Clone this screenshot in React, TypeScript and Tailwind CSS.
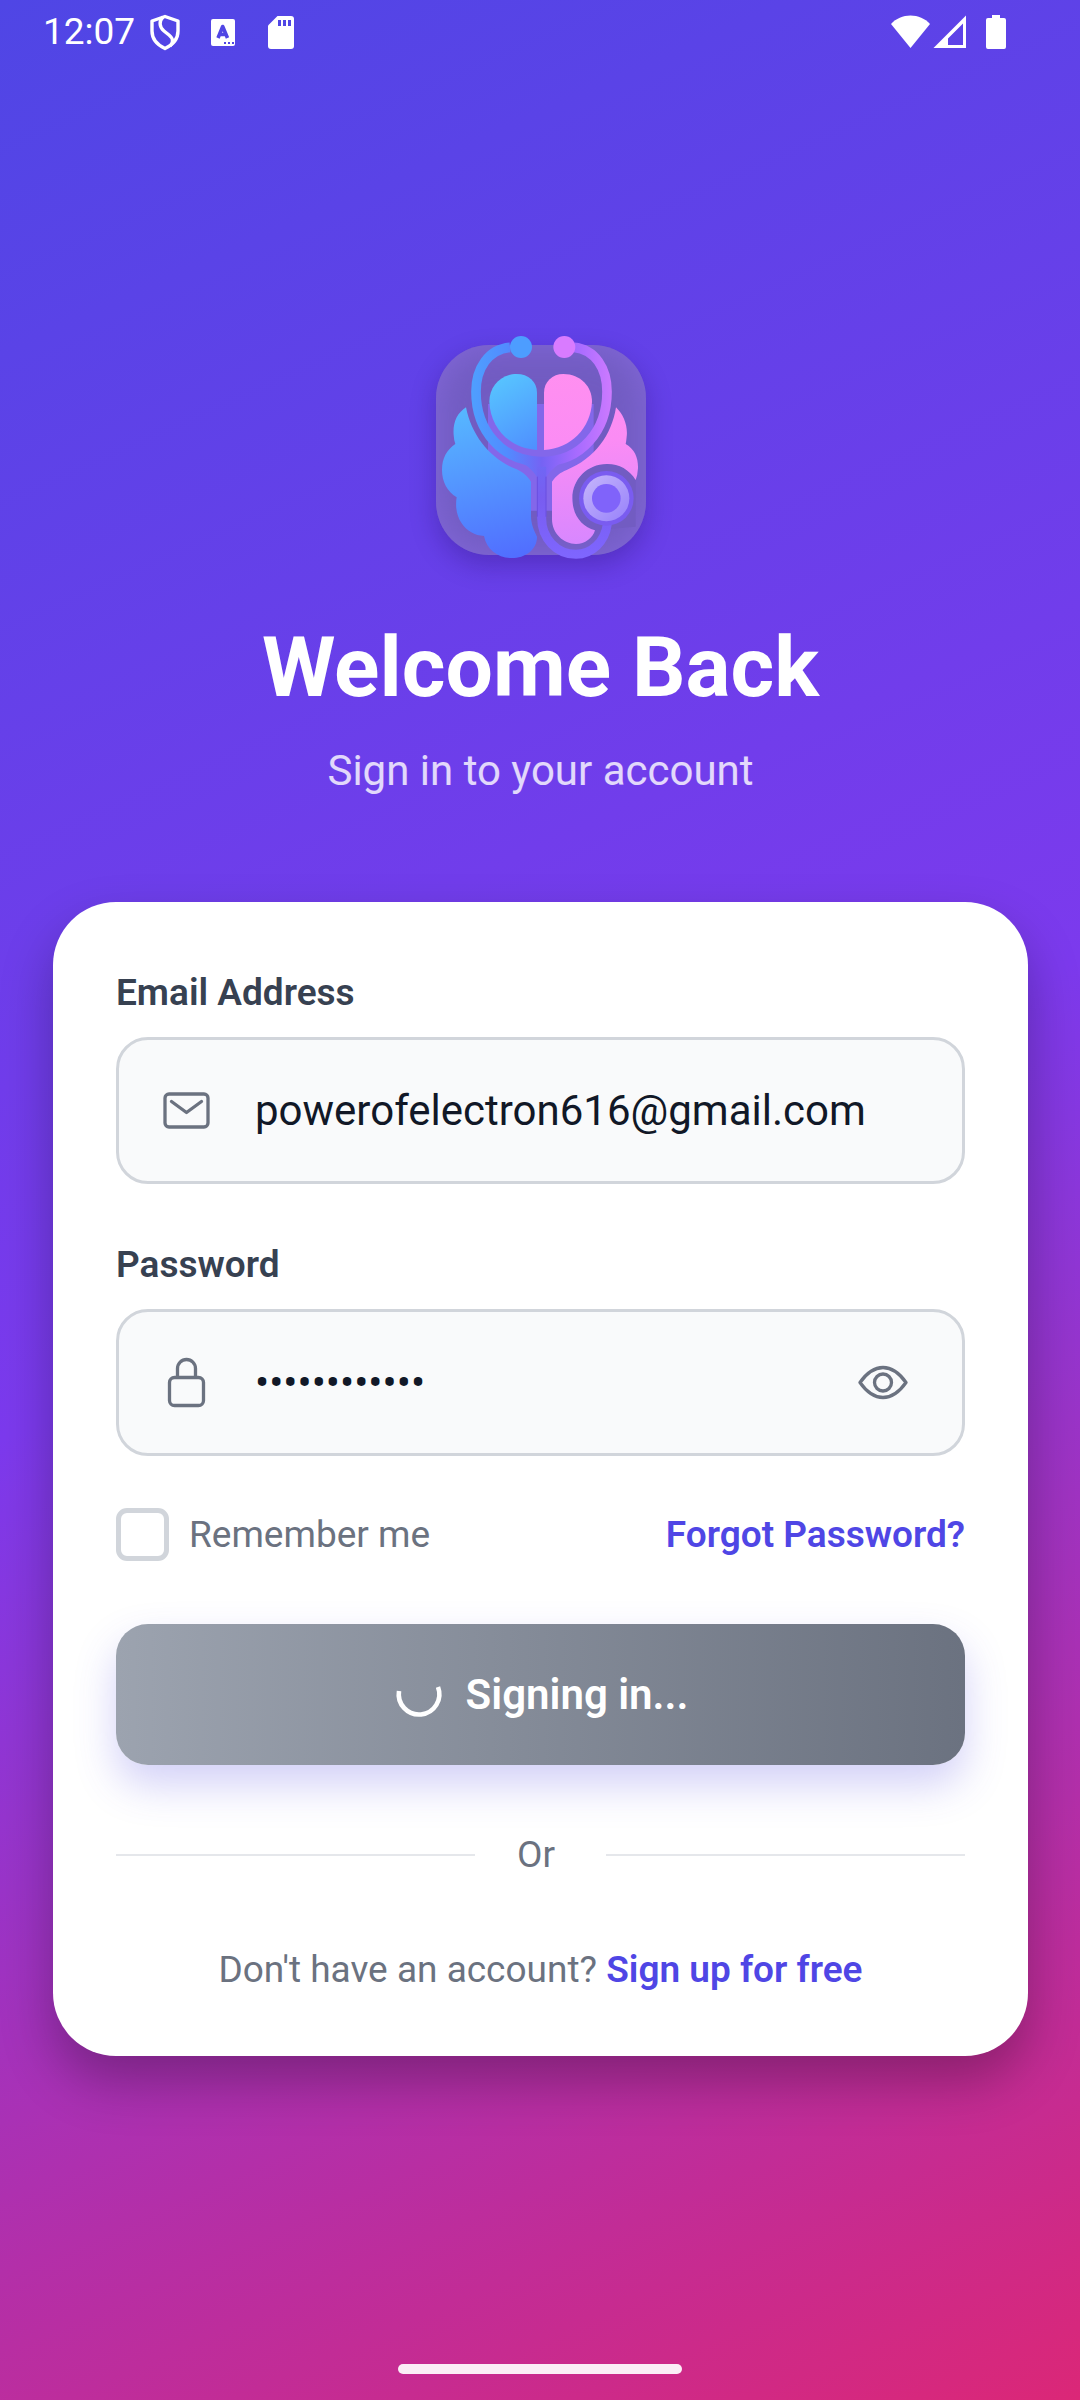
import { useState } from 'react';

function StatusIcons() {
  return (
    <div className="flex items-center text-white">
      <svg viewBox="0 0 32 38" className="ml-[14px] h-[38px] w-8" fill="none" stroke="currentColor" strokeWidth="3.400">
        <path d="M16 3.500 29 8V18C29 26 23.500 32 16 35.500 8.500 32 3 26 3 18V8Z" strokeLinejoin="round" />
        <path d="M14 4C10 8 10 14 15 18L20 22C25 26 24 30 21 33" />
      </svg>
      <svg viewBox="0 0 24 27" className="ml-[30px] h-[27px] w-6">
        <rect width="24" height="27" rx="2" fill="currentColor" />
        <path d="M7 19 11.700 7.500 16.500 19M8.500 15.500h6.500" stroke="#5046e4" strokeWidth="3.600" fill="none" strokeLinejoin="round" />
        <path d="M13 23h2v2h-2zm4 0h2v2h-2zm4 0h2v2h-2z" fill="#5046e4" />
      </svg>
      <svg viewBox="0 0 26 33" className="ml-[33px] h-[33px] w-[26px]">
        <path d="M9.500 0H23a3 3 0 0 1 3 3V30a3 3 0 0 1-3 3H3a3 3 0 0 1-3-3V9.500Z" fill="currentColor" />
        <path d="M10 4h3v6h-3zm5 0h3v6h-3zm5 0h3v6h-3z" fill="#5046e4" />
      </svg>
    </div>
  );
}

function SignalIcons() {
  return (
    <div className="flex items-center text-white">
      <svg viewBox="0 0 40 34" className="h-[34px] w-10" fill="currentColor">
        <path d="M0 9C5 3.500 12 .500 19.500 .500S34 3.500 39 9L19.500 33Z" />
      </svg>
      <svg viewBox="0 0 34 34" className="ml-[2px] h-[34px] w-[34px]" fill="currentColor" fillRule="evenodd">
        <path d="M33 .500V33H.500ZM30 8.500 15 23.500V30H30Z" />
      </svg>
      <svg viewBox="0 0 20 34" className="ml-[19px] h-[34px] w-5" fill="currentColor">
        <path d="M6 0h8v3h4a2 2 0 0 1 2 2V32a2 2 0 0 1-2 2H2a2 2 0 0 1-2-2V5a2 2 0 0 1 2-2h4Z" />
      </svg>
    </div>
  );
}

function Logo() {
  return (
    <div className="relative size-[210px] rounded-[53px] bg-[#725cc2] shadow-[0_10px_26px_rgba(30,10,90,0.28),inset_0_0_36px_rgba(136,108,226,0.75)]">
      <svg viewBox="0 0 720 780" className="absolute -left-4 -top-[25px] h-[260px] w-60" role="img" aria-label="Brain and stethoscope logo">
        <defs>
          <linearGradient id="left" gradientUnits="userSpaceOnUse" x1="150" y1="180" x2="290" y2="714">
            <stop stopColor="#57c4ff" />
            <stop offset="1" stopColor="#516dff" />
          </linearGradient>
          <linearGradient id="lobe" gradientUnits="userSpaceOnUse" x1="225" y1="180" x2="351" y2="390">
            <stop stopColor="#57c4ff" />
            <stop offset="1" stopColor="#4f8eff" />
          </linearGradient>
          <linearGradient id="right" gradientUnits="userSpaceOnUse" x1="440" y1="160" x2="470" y2="672">
            <stop stopColor="#ff8ff0" />
            <stop offset=".4" stopColor="#fb8cf4" />
            <stop offset="1" stopColor="#d887ff" />
          </linearGradient>
          <linearGradient id="tube" gradientUnits="userSpaceOnUse" x1="154" y1="0" x2="576" y2="0">
            <stop stopColor="#4f9fff" />
            <stop offset=".25" stopColor="#518cff" />
            <stop offset=".5" stopColor="#7563f4" />
            <stop offset=".75" stopColor="#a76bff" />
            <stop offset="1" stopColor="#cd7aff" />
          </linearGradient>
          <linearGradient id="stem" gradientUnits="userSpaceOnUse" x1="0" y1="410" x2="0" y2="717">
            <stop stopColor="#6d6af6" />
            <stop offset=".4" stopColor="#785df0" />
            <stop offset="1" stopColor="#7f66ff" />
          </linearGradient>
          <linearGradient id="ring" x1="0" y1="0" x2="1" y2="1">
            <stop stopColor="#c6b6fb" />
            <stop offset="1" stopColor="#9781fb" />
          </linearGradient>
        </defs>
        <path d="M204 252H521V572H204Z" fill="#8367ea" />
        <path d="M525 631C485 620 457 585 457 535C457 478 502 432 560 432C595 431 628 448 647 480V620Z" fill="#725cc2" />
        <path d="M138 262C110 280 98 310 101 345Q102 362 106 372C80 390 66 415 66 450C66 485 82 515 110 532C106 555 108 585 125 610C140 633 165 647 192 648C200 690 235 714 275 714C315 714 351 690 351 650C342 630 334 615 333 590V485C322 468 310 458 290 448C215 420 155 350 138 262Z" fill="url(#left)" />
        <path d="M588 262C612 285 624 320 620 350Q619 362 617 372C645 388 655 415 654 445Q653 465 647 480C628 448 595 431 560 432C502 432 457 478 457 535C457 585 485 620 525 631C518 655 495 672 468 672C430 672 396 640 396 598V485C408 468 420 458 440 450C525 415 575 345 588 262Z" fill="url(#right)" />
        <path d="M351 390V218C351 185 325 162 290 162C242 162 208 200 208 245C211 325 270 385 351 390Z" fill="url(#lobe)" />
        <path d="M372 390V218C372 185 398 162 430 162C482 162 516 200 516 245C512 325 453 385 372 390Z" fill="url(#right)" />
        <path d="M270 82C205 88 168 145 168 215C168 330 245 425 365 425C485 425 561 330 561 215C561 145 525 88 462 82" fill="none" stroke="url(#tube)" strokeWidth="29" />
        <path d="M285 415Q330 438 352 472H378Q400 438 445 415Z" fill="url(#tube)" />
        <path d="M365 440V595C365 655 410 703 468 703C515 703 555 665 562 612" fill="none" stroke="url(#stem)" strokeWidth="27" />
        <path d="M352 470V590M378 470V590" stroke="#6a4fe0" strokeWidth="3" />
        <circle cx="303" cy="81" r="33" fill="#4d9dff" />
        <circle cx="433" cy="81" r="33" fill="#d97bff" />
        <circle cx="559" cy="535" r="82" fill="#7a5cf0" />
        <circle cx="559" cy="535" r="69" fill="url(#ring)" />
        <circle cx="559" cy="535" r="43" fill="#8063fa" />
      </svg>
    </div>
  );
}

function MailIcon() {
  return (
    <svg viewBox="0 0 52 52" className="size-[52px] shrink-0" fill="none" stroke="#6b7280" strokeWidth="3.300" strokeLinecap="round" strokeLinejoin="round" aria-hidden="true">
      <rect x="4" y="9" width="43" height="33" rx="4" />
      <path d="M10.500 16.500 25.500 27.500 40.500 16.500" />
    </svg>
  );
}

function LockIcon() {
  return (
    <svg viewBox="0 0 52 52" className="size-[52px] shrink-0" fill="none" stroke="#6b7280" strokeWidth="3.300" strokeLinejoin="round" aria-hidden="true">
      <rect x="8.500" y="20.500" width="34" height="28" rx="5" />
      <path d="M16.500 20.500V11.500a9 9 0 0 1 18 0V20.500" />
    </svg>
  );
}

function EyeIcon() {
  return (
    <svg viewBox="0 0 52 52" className="size-[52px]" fill="none" stroke="#6b7280" strokeWidth="3.300" strokeLinejoin="round" aria-hidden="true">
      <path d="M2 25.500C8 17 16 10.500 25 10.500S42 17 48 25.500C42 34 34 40.500 25 40.500S8 34 2 25.500Z" />
      <circle cx="25" cy="25.500" r="8.500" />
    </svg>
  );
}

const field = 'flex h-[147px] items-center rounded-[32px] border-[3px] border-[#d1d5db] bg-[#f9fafb] pl-[42px] pr-[52px]';
const label = 'block text-[37px] leading-[44px] font-semibold text-[#374151]';
const input = 'ml-[42px] min-w-0 flex-1 bg-transparent text-[42px] leading-[50px] text-[#111827] outline-none';

export default function App() {
  const [email, setEmail] = useState('powerofelectron616@gmail.com');
  const [password, setPassword] = useState('electron6161');
  const [visible, setVisible] = useState(false);
  const [remember, setRemember] = useState(false);

  return (
    <div className="flex min-h-screen flex-col bg-[linear-gradient(156deg,#4f46e5_0%,#7c3aed_50%,#db2777_100%)] font-['Roboto',sans-serif]">
      <header className="flex h-16 items-center justify-between pl-[43px] pr-[74px]">
        <div className="flex items-center">
          <span className="text-[37px] leading-[44px] text-white">12:07</span>
          <StatusIcons />
        </div>
        <SignalIcons />
      </header>

      <main className="flex flex-1 flex-col pr-[52px] pl-[53px] pt-[281px]">
        <div className="flex flex-col items-center text-center">
          <Logo />
          <h1 className="mt-[63px] text-[84px] leading-[100px] font-bold text-white">Welcome Back</h1>
          <p className="mt-[28px] text-[42px] leading-[50px] text-white/80">Sign in to your account</p>
        </div>

        <form
          className="mt-[106px] rounded-[63px] bg-white px-[63px] pt-[69px] pb-[64px] shadow-[0_26px_52px_rgba(0,0,0,0.28)]"
          onSubmit={(e) => e.preventDefault()}
        >
          <label htmlFor="email" className={label}>Email Address</label>
          <div className={`${field} mt-[22px]`}>
            <MailIcon />
            <input id="email" type="email" value={email} onChange={(e) => setEmail(e.target.value)} className={input} />
          </div>

          <label htmlFor="password" className={`${label} mt-[59px]`}>Password</label>
          <div className={`${field} mt-[22px]`}>
            <LockIcon />
            <input
              id="password"
              type={visible ? 'text' : 'password'}
              value={password}
              onChange={(e) => setPassword(e.target.value)}
              className={input}
            />
            <button type="button" aria-label="Show password" onClick={() => setVisible(!visible)}>
              <EyeIcon />
            </button>
          </div>

          <div className="mt-[52px] flex items-center justify-between">
            <label className="flex items-center gap-5 text-[37px] leading-[44px] text-[#6b7280]">
              <input
                type="checkbox"
                checked={remember}
                onChange={(e) => setRemember(e.target.checked)}
                className="size-[53px] appearance-none rounded-[11px] border-[5px] border-[#d1d5db] bg-white checked:bg-[#4f46e5]"
              />
              Remember me
            </label>
            <a href="#forgot" className="text-[37px] leading-[44px] font-semibold text-[#4f46e5]">Forgot Password?</a>
          </div>

          <button
            type="submit"
            className="mt-[63px] flex h-[141px] w-full items-center justify-center gap-[21px] rounded-[32px] bg-linear-to-r from-[#9ca3af] to-[#6b7280] text-[42px] leading-[50px] font-semibold text-white shadow-[0_20px_40px_rgba(79,70,229,0.25)]"
          >
            <svg viewBox="0 0 52 52" className="size-[52px]" fill="none" stroke="currentColor" strokeWidth="4.600" aria-hidden="true">
              <path d="M6 22A20.300 20.300 0 1 0 45 18" />
            </svg>
            Signing in...
          </button>

          <div className="mt-[68px] flex items-center text-[37px] leading-[44px] text-[#6b7280]">
            <span className="h-[2px] flex-1 bg-[#e5e7eb]" />
            <span className="mx-[42px] w-[47px]">Or</span>
            <span className="h-[2px] flex-1 bg-[#e5e7eb]" />
          </div>

          <p className="mt-[71px] text-center text-[37px] leading-[44px] text-[#6b7280]">
            Don't have an account?{' '}
            <a href="#signup" className="font-semibold text-[#4f46e5]">Sign up for free</a>
          </p>
        </form>
      </main>

      <footer className="flex justify-center pb-[26px]">
        <div className="h-[10px] w-[284px] rounded-full bg-white/92" />
      </footer>
    </div>
  );
}
